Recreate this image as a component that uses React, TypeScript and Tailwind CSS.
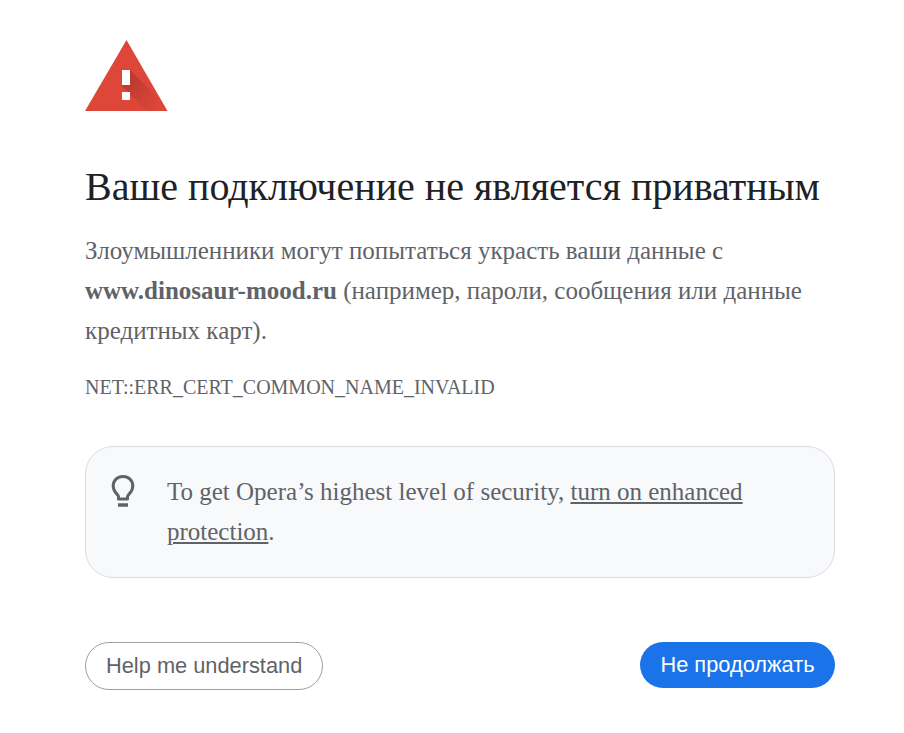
export default function App() {
  return (
    <div className="min-h-[733px] bg-white pl-[85px] pr-[69px] pt-[40px] font-['Liberation_Serif',serif] text-[#5f6368]">
      <svg width="83" height="71" viewBox="0 0 83 71" className="block">
        <defs>
          <linearGradient id="s" x1="0.1" y1="0.1" x2="0.9" y2="0.9">
            <stop offset="0" stopColor="#a8342b" stopOpacity="0.75" />
            <stop offset="1" stopColor="#a8342b" stopOpacity="0.08" />
          </linearGradient>
        </defs>
        <path d="M41.5 0 L82.5 71 L0 71 Z" fill="#de463a" />
        <path d="M45 30 L72 57 L72 71 L62 71 L37 46 Z" fill="url(#s)" />
        <rect x="37" y="30" width="8" height="15" fill="#ffffff" />
        <rect x="37" y="52" width="8" height="8" fill="#ffffff" />
      </svg>
      <h1 className="mt-[49px] text-[40px] leading-[54px] font-normal text-[#202124]">Ваше подключение не является приватным</h1>
      <p className="mt-[17px] text-[25px] leading-[40px]">
        Злоумышленники могут попытаться украсть ваши данные с <strong className="font-bold">www.dinosaur-mood.ru</strong> (например, пароли, сообщения или данные кредитных карт).
      </p>
      <div className="mt-[24px] text-[20px] leading-[24px]">NET::ERR_CERT_COMMON_NAME_INVALID</div>
      <div className="mt-[47px] flex rounded-[28px] border border-[#dadce0] bg-[#f8f9fa] pl-[24px] pr-[24px] pt-[25px] pb-[25px]">
        <svg width="28" height="34" viewBox="0 0 28 34" className="mt-[2px] shrink-0" fill="none" stroke="#5f6368" strokeWidth="3">
          <path d="M8.5 25 L8.5 22.5 C8.5 20.5 3.2 18.5 3.2 12 C3.2 6.4 7.4 2.5 13 2.5 C18.6 2.5 22.8 6.4 22.8 12 C22.8 18.5 17.5 20.5 17.5 22.5 L17.5 25 Z" strokeLinejoin="round" />
          <path d="M8 31 L18 31" strokeWidth="3.5" />
        </svg>
        <p className="ml-[29px] text-[25px] leading-[40px]">
          To get Opera’s highest level of security, <span className="underline">turn on enhanced protection</span>.
        </p>
      </div>
      <div className="mt-[64px] flex items-start justify-between font-['Liberation_Sans',sans-serif] text-[21.8px]">
        <button className="h-[48px] rounded-full border border-[#9aa0a6] bg-white px-[20px] text-[#5f6368]">Help me understand</button>
        <button className="h-[46px] w-[195px] rounded-full bg-[#1a73e8] text-white">Не продолжать</button>
      </div>
    </div>
  );
}
